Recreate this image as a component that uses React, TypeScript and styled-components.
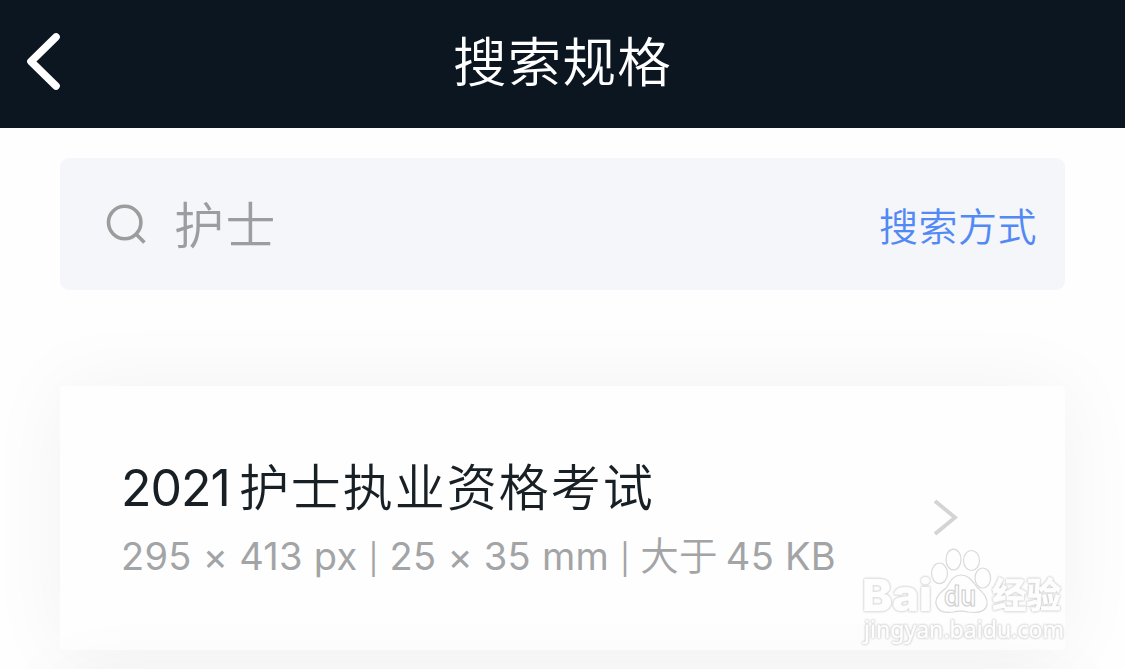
import React, { useState } from 'react';
import styled, { createGlobalStyle } from 'styled-components';

const GlobalStyle = createGlobalStyle`
    body {
        margin: 0;
        background: #fefefe;
        overflow: hidden;
        font-family: Inter, "Noto Sans CJK SC", sans-serif;
    }
    * {
        box-sizing: border-box;
    }
`;

const Screen = styled.div`
    height: 669px;
    overflow: hidden;
`;

const Header = styled.header`
    display: grid;
    grid-template-columns: 120px 1fr 120px;
    align-items: center;
    height: 128px;
    background: #0c1621;
    color: #fff;
`;

const BackButton = styled.button`
    display: flex;
    width: 60px;
    margin-left: 20px;
    padding: 0 0 4px;
    border: 0;
    background: none;
    color: inherit;
`;

const Title = styled.h1`
    margin: 0;
    padding: 0 0 11px;
    text-align: center;
    font-family: "Noto Sans CJK SC", sans-serif;
    font-size: 53.5px;
    font-weight: 350;
    line-height: 70px;
    letter-spacing: 1.3px;
`;

const SearchBar = styled.form`
    display: flex;
    align-items: center;
    height: 132px;
    margin: 30px 60px 0;
    padding: 0 28px 0 45px;
    border-radius: 9px;
    background: #f4f6fa;
`;

const SearchInput = styled.input`
    flex: 1;
    min-width: 0;
    height: 80px;
    margin-left: 27px;
    padding: 0 0 5px;
    border: 0;
    outline: 0;
    background: none;
    color: #9c9da0;
    font: 350 50px Inter, "Noto Sans CJK SC", sans-serif;
    letter-spacing: 1.5px;
`;

const SearchMode = styled.button`
    padding: 0 0 1px;
    border: 0;
    background: none;
    color: #5289f5;
    font: 350 39px Inter, "Noto Sans CJK SC", sans-serif;
    letter-spacing: 0.5px;
`;

const List = styled.main`
    display: flex;
    flex-direction: column;
    gap: 30px;
    padding: 96px 60px 0;
`;

const Card = styled.section`
    display: flex;
    align-items: center;
    height: 264px;
    flex-shrink: 0;
    padding: 0 107px 0 61px;
    border-radius: 3px;
    background: #fefefe;
    box-shadow: 0 0 80px rgba(0, 0, 0, 0.05);
`;

const Info = styled.div`
    flex: 1;
    white-space: nowrap;
`;

const Name = styled.h2`
    display: flex;
    align-items: baseline;
    margin: 0;
    color: #182026;
    font-family: "Noto Sans CJK SC", sans-serif;
    font-size: 50px;
    font-weight: 350;
    line-height: 72px;
    letter-spacing: 2px;
`;

const Year = styled.span`
    margin-right: 9px;
    font-family: Inter, sans-serif;
    font-weight: 400;
    letter-spacing: -1px;
`;

const Detail = styled.p`
    display: flex;
    align-items: baseline;
    margin: 0;
    color: #a3a4a6;
    font-size: 38px;
    line-height: 58px;
    letter-spacing: 0.3px;
`;

const Divider = styled.span`
    width: 32px;
    text-align: center;
    font-size: 30px;
`;

const Compare = styled.span`
    margin: 0 8px 0 -1px;
    font-family: "Noto Sans CJK SC", sans-serif;
    font-weight: 350;
    font-size: 38.5px;
`;

const Watermark = styled.svg`
    position: absolute;
    left: 856px;
    top: 540px;
    pointer-events: none;
`;

const Halo = styled.g`
    filter: drop-shadow(0 0 0.8px #c4c4c4) drop-shadow(0 0 0.4px #dcdcdc);
`;

const results = [
    { year: "2021", name: "护士执业资格考试", pixels: "295 × 413 px", size: "25 × 35 mm", compare: "大于", weight: "45 KB" }
];

function BackIcon() {
    return (
        <svg width="44" height="64" viewBox="0 0 44 64" fill="none" stroke="currentColor" strokeWidth="7.6" strokeLinecap="round" strokeLinejoin="round">
            <path d="M36 7 11 31.5 36 56" />
        </svg>
    )
}

function SearchIcon() {
    return (
        <svg width="42" height="42" viewBox="0 0 42 42" fill="none" stroke="#9c9c9c" strokeWidth="3.6">
            <circle cx="19.7" cy="19.5" r="16.2" />
            <path d="m31 31 8.4 8.4" />
        </svg>
    )
}

function ArrowIcon() {
    return (
        <svg width="24" height="38" viewBox="0 0 24 38" fill="none" stroke="#d4d4d4" strokeWidth="3.8">
            <path d="M1 2 21 18.5 1 35" />
        </svg>
    )
}

function BaiduMark() {
    return (
        <Watermark width="212" height="110" viewBox="0 0 212 110" fill="#fefefe" stroke="#fefefe">
            <g stroke="#dadada" strokeWidth="1.2">
                <ellipse cx="83.5" cy="53.3" rx="8" ry="10.3" transform="translate(0 -20)" />
                <ellipse cx="97.5" cy="19.5" rx="7.5" ry="10.3" />
                <ellipse cx="115.5" cy="20.5" rx="8" ry="10" />
                <ellipse cx="126.8" cy="38" rx="7.8" ry="10" />
                <path d="M105 35c-9 0-11 8-15 13-5 4-11 9-10 16 2 9 10 9 17 8 5-1 11-1 15 0 7 1 17 1 19-7 1-8-4-12-9-17-5-5-8-13-17-13Z" />
            </g>
            <text x="88" y="66" fontFamily="Inter, sans-serif" fontSize="29" fontWeight="600" textLength="32" lengthAdjust="spacingAndGlyphs" stroke="#cfcfcf" strokeWidth="1.2">du</text>
            <Halo>
                <text x="6" y="71" fontFamily="Inter, sans-serif" fontSize="44" fontWeight="800" textLength="70" lengthAdjust="spacingAndGlyphs" strokeWidth="0.6">Bai</text>
                <text x="136" y="68" fontFamily='"Noto Sans CJK SC", sans-serif' fontSize="35" fontWeight="700" textLength="69" lengthAdjust="spacingAndGlyphs" strokeWidth="0.8">经验</text>
                <text x="8" y="98" fontFamily='"Noto Sans", sans-serif' fontSize="23" textLength="200" lengthAdjust="spacingAndGlyphs" strokeWidth="0.4">jingyan.baidu.com</text>
            </Halo>
        </Watermark>
    )
}

export default function App() {
    const [keyword, setKeyword] = useState("护士");

    return (
        <Screen>
            <GlobalStyle />
            <Header>
                <BackButton aria-label="返回"><BackIcon /></BackButton>
                <Title>搜索规格</Title>
            </Header>
            <SearchBar onSubmit={(e: any) => e.preventDefault()}>
                <SearchIcon />
                <SearchInput value={keyword} onChange={(e: any) => setKeyword(e.target.value)} />
                <SearchMode type="button">搜索方式</SearchMode>
            </SearchBar>
            <List>
                {results.map(item => (
                    <Card key={item.name}>
                        <Info>
                            <Name><Year>{item.year}</Year>{item.name}</Name>
                            <Detail>
                                <span>{item.pixels}</span>
                                <Divider>|</Divider>
                                <span>{item.size}</span>
                                <Divider>|</Divider>
                                <Compare>{item.compare}</Compare>
                                <span>{item.weight}</span>
                            </Detail>
                        </Info>
                        <ArrowIcon />
                    </Card>
                ))}
                <Card />
            </List>
            <BaiduMark />
        </Screen>
    )
}
